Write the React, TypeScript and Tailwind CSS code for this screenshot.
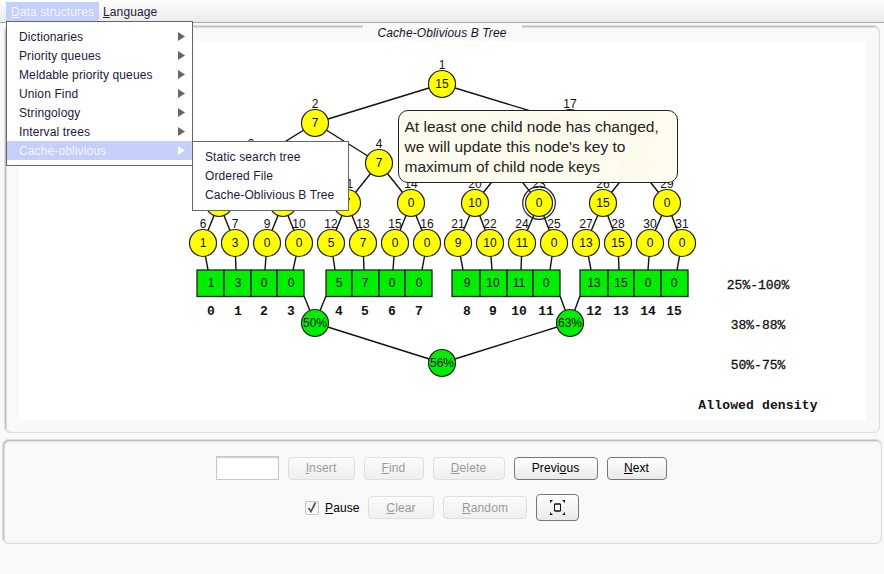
import type { ReactNode } from "react";

const FONT = "font-['Liberation_Sans',Arial,sans-serif]";

// tree node: x, y, label, value
const TREE: [number, number, string, string][] = [
  [442, 84, "1", "15"],
  [315, 123, "2", "7"],
  [570, 123, "17", "15"],
  [251, 163, "3", "3"],
  [379, 163, "4", "7"],
  [507, 163, "18", "11"],
  [635, 163, "19", "15"],
  [219, 203, "5", "3"],
  [283, 203, "8", "0"],
  [347, 203, "11", "7"],
  [411, 203, "14", "0"],
  [475, 203, "20", "10"],
  [539, 203, "23", "0"],
  [603, 203, "26", "15"],
  [667, 203, "29", "0"],
  [203, 243, "6", "1"],
  [235, 243, "7", "3"],
  [267, 243, "9", "0"],
  [299, 243, "10", "0"],
  [331, 243, "12", "5"],
  [363, 243, "13", "7"],
  [395, 243, "15", "0"],
  [427, 243, "16", "0"],
  [458, 243, "21", "9"],
  [490, 243, "22", "10"],
  [522, 243, "24", "11"],
  [554, 243, "25", "0"],
  [586, 243, "27", "13"],
  [618, 243, "28", "15"],
  [650, 243, "30", "0"],
  [682, 243, "31", "0"],
];

const EDGES: [number, number, number, number][] = [
  [442, 84, 315, 123],
  [442, 84, 570, 123],
  [315, 123, 251, 163],
  [315, 123, 379, 163],
  [570, 123, 507, 163],
  [570, 123, 635, 163],
  [251, 163, 219, 203],
  [251, 163, 283, 203],
  [379, 163, 347, 203],
  [379, 163, 411, 203],
  [507, 163, 475, 203],
  [507, 163, 539, 203],
  [635, 163, 603, 203],
  [635, 163, 667, 203],
  [219, 203, 203, 243],
  [219, 203, 235, 243],
  [283, 203, 267, 243],
  [283, 203, 299, 243],
  [347, 203, 331, 243],
  [347, 203, 363, 243],
  [411, 203, 395, 243],
  [411, 203, 427, 243],
  [475, 203, 458, 243],
  [475, 203, 490, 243],
  [539, 203, 522, 243],
  [539, 203, 554, 243],
  [603, 203, 586, 243],
  [603, 203, 618, 243],
  [667, 203, 650, 243],
  [667, 203, 682, 243],
  // leaf to array cell
  [203, 243, 208, 270],
  [235, 243, 236, 270],
  [267, 243, 265, 270],
  [299, 243, 293, 270],
  [331, 243, 335, 270],
  [363, 243, 364, 270],
  [395, 243, 393, 270],
  [427, 243, 422, 270],
  [458, 243, 463, 270],
  [490, 243, 492, 270],
  [522, 243, 521, 270],
  [554, 243, 550, 270],
  [586, 243, 591, 270],
  [618, 243, 619, 270],
  [650, 243, 648, 270],
  [682, 243, 677, 270],
  // density tree
  [304, 296, 315, 323],
  [326, 296, 315, 323],
  [560, 296, 570, 323],
  [580, 296, 570, 323],
  [315, 323, 442, 363],
  [570, 323, 442, 363],
];

// array cell: x, width, value, text x
const CELLS: [number, number, string, number][] = [
  [197, 27, "1", 211],
  [224, 27, "3", 238],
  [251, 26, "0", 264],
  [277, 27, "0", 291],
  [326, 26, "5", 339],
  [352, 27, "7", 365],
  [379, 26, "0", 392],
  [405, 27, "0", 419],
  [452, 28, "9", 467],
  [480, 27, "10", 493],
  [507, 26, "11", 519],
  [533, 27, "0", 546],
  [580, 28, "13", 594],
  [608, 26, "15", 621],
  [634, 27, "0", 648],
  [661, 27, "0", 674],
];

const DENSITY: [number, number, string][] = [
  [315, 323, "50%"],
  [570, 323, "63%"],
  [442, 363, "56%"],
];

const RANGES: [number, string, boolean][] = [
  [289, "25%-100%", false],
  [329, "38%-88%", false],
  [369, "50%-75%", false],
  [409, "Allowed density", true],
];

function TreeDrawing() {
  return (
    <svg width={847} height={379} viewBox="19 41 847 379" className="block tracking-normal">
      {EDGES.map(([x1, y1, x2, y2], i) => (
        <line key={i} x1={x1} y1={y1} x2={x2} y2={y2} stroke="#111" strokeWidth={1.4} />
      ))}
      <g fontFamily="'Liberation Sans', Arial, sans-serif" fontSize={12} textAnchor="middle" fill="#111">
        {TREE.map(([x, y, label, value]) => (
          <g key={label}>
            <circle cx={x} cy={y} r={13.5} fill="#ffff00" stroke="#222" strokeWidth={1.2} />
            {label === "23" && <circle cx={x} cy={y} r={16.3} fill="none" stroke="#222" strokeWidth={1.2} />}
            <text x={x} y={y - 15.5}>{label}</text>
            <text x={x} y={y + 4}>{value}</text>
          </g>
        ))}
        {CELLS.map(([x, w, value, tx], i) => (
          <g key={i}>
            <rect x={x} y={270} width={w} height={26.5} fill="#00ee00" stroke="#222" strokeWidth={1.3} />
            <text x={tx} y={287}>{value}</text>
          </g>
        ))}
        {DENSITY.map(([x, y, value]) => (
          <g key={value}>
            <circle cx={x} cy={y} r={13.5} fill="#00ee00" stroke="#222" strokeWidth={1.2} />
            <text x={x} y={y + 4}>{value}</text>
          </g>
        ))}
      </g>
      <g fontFamily="'Liberation Mono', 'Courier New', monospace" fontSize={13} textAnchor="middle" fill="#111">
        {CELLS.map(([, , , tx], i) => (
          <text key={i} x={tx} y={315} fontWeight={700}>{i}</text>
        ))}
        {RANGES.map(([y, text, bold]) => (
          <text
            key={text}
            x={758}
            y={y}
            fontWeight={bold ? 700 : 400}
            stroke="#111"
            strokeWidth={bold ? 0 : 0.3}
            letterSpacing={bold ? 0.15 : 0}
          >
            {text}
          </text>
        ))}
      </g>
    </svg>
  );
}

function Arrow({ white }: { white?: boolean }) {
  return (
    <svg width={7} height={9} viewBox="0 0 7 9" className="shrink-0">
      <path d="M0 0 L7 4.5 L0 9 Z" fill={white ? "#ffffff" : "#666666"} />
    </svg>
  );
}

function MenuItem({ label, active }: { label: string; active?: boolean }) {
  return (
    <div
      className={
        "flex h-[19px] items-center justify-between pl-[12px] pr-[7px] " +
        (active ? "bg-[#c4cffa] text-[#f4f5ff]" : "text-[#20203a]")
      }
    >
      <span>{label}</span>
      <Arrow white={active} />
    </div>
  );
}

function Btn({
  children,
  w,
  h = "h-[23px]",
  off,
}: {
  children: ReactNode;
  w: string;
  h?: string;
  off?: boolean;
}) {
  return (
    <button
      className={
        `${w} ${h} flex items-center justify-center rounded-[4px] border text-[12px] ` +
        (off
          ? "border-[#dfdfdf] bg-linear-to-b from-[#fbfbfb] to-[#efefef] text-[#9a9a9a]"
          : "border-[#777777] bg-linear-to-b from-[#ffffff] to-[#e9e9e9] text-black")
      }
    >
      {children}
    </button>
  );
}

export default function App() {
  return (
    <div className={`relative h-[574px] w-[884px] overflow-hidden bg-[#f9f9f9] text-[12px] tracking-[0.12px] ${FONT}`}>
      {/* Menu bar */}
      <div className="flex h-[23px] items-end border-b border-[#a9a9a9] bg-linear-to-b from-[#fefefe] to-[#ebebeb] pl-[6px]">
        <div className="flex h-[20px] w-[93px] items-center justify-center bg-[#c4cffa] text-[#f4f5ff]">
          <span>
            <u>D</u>ata structures
          </span>
        </div>
        <div className="flex h-[20px] items-center pl-[4px] text-[#20203a]">
          <span>
            <u>L</u>anguage
          </span>
        </div>
      </div>

      {/* Canvas panel */}
      <div className="mx-[4px] mt-[2px] flex h-[408px] flex-col items-center rounded-[6px] border border-[#dedede] shadow-[inset_1px_1px_2px_#a8a8a8]">
        <div className="-mt-px flex h-[16px] w-[159px] shrink-0 items-center justify-center bg-[#f9f9f9] italic text-[#14142a]">
          Cache-Oblivious B Tree
        </div>
        <div className="relative h-[379px] w-[847px] shrink-0 bg-white">
          <TreeDrawing />
          <div className="absolute left-[379px] top-[69px] h-[73px] w-[280px] rounded-[10px] border-[1.5px] border-[#222222] bg-[#fdfcee]/[0.985] pl-[6px] pt-[6px] text-[15.5px] leading-[20px] tracking-normal text-[#222222]">
            <div>At least one child node has changed,</div>
            <div>we will update this node's key to</div>
            <div>maximum of child node keys</div>
          </div>
        </div>
      </div>

      {/* Controls panel */}
      <div className="mx-[2px] mt-[6px] flex h-[105px] flex-col items-center gap-[14px] rounded-[6px] border border-[#dedede] pr-[2px] pt-[16px] shadow-[inset_1px_1px_2px_#a8a8a8]">
        <div className="flex items-center gap-[9px]">
          <div className="h-[24px] w-[63px] border border-[#c8c8c8] bg-white shadow-[inset_0_1px_1px_#cccccc]" />
          <Btn w="w-[67px]" off>
            <span>
              <u>I</u>nsert
            </span>
          </Btn>
          <Btn w="w-[60px]" off>
            <span>
              <u>F</u>ind
            </span>
          </Btn>
          <Btn w="w-[72px]" off>
            <span>
              <u>D</u>elete
            </span>
          </Btn>
          <Btn w="w-[84px]">
            <span>
              Previ<u>o</u>us
            </span>
          </Btn>
          <Btn w="w-[60px]">
            <span>
              <u>N</u>ext
            </span>
          </Btn>
        </div>
        <div className="ml-[2px] flex items-center">
          <div className="flex h-[14px] w-[14px] items-center justify-center rounded-[2px] border border-[#c3c3d0] bg-linear-to-b from-[#f0f0f0] to-[#ffffff]">
            <svg width={10} height={11} viewBox="0 0 10 11">
              <path d="M1.5 6 L4 9.5 L8.5 0.5" fill="none" stroke="#555555" strokeWidth={1.7} />
            </svg>
          </div>
          <span className="ml-[6px] w-[37px] text-black">
            <u>P</u>ause
          </span>
          <div className="w-[6px]" />
          <Btn w="w-[66px]" off>
            <span>
              <u>C</u>lear
            </span>
          </Btn>
          <div className="w-[9px]" />
          <Btn w="w-[84px]" off>
            <span>
              <u>R</u>andom
            </span>
          </Btn>
          <div className="w-[9px]" />
          <Btn w="w-[43px]" h="h-[27px]">
            <svg width={15} height={15} viewBox="0 0 15 15" fill="none" stroke="#111111">
              <path d="M4.5 4H10.5M4.5 11H10.5" strokeWidth={1.4} />
              <path d="M4.5 4V11M10.5 4V11" strokeWidth={1} />
              <path d="M0 0H3L0 3ZM15 0V3L12 0ZM15 15H12L15 12ZM0 15V12L3 15Z" fill="#111111" stroke="none" />
            </svg>
          </Btn>
        </div>
      </div>

      {/* Open menus */}
      <div className="absolute left-[6px] top-[21px] w-[187px] border border-[#666666] bg-white py-[5px]">
        <MenuItem label="Dictionaries" />
        <MenuItem label="Priority queues" />
        <MenuItem label="Meldable priority queues" />
        <MenuItem label="Union Find" />
        <MenuItem label="Stringology" />
        <MenuItem label="Interval trees" />
        <MenuItem label="Cache-oblivious" active />
      </div>
      <div className="absolute left-[192px] top-[141px] w-[157px] border border-[#666666] bg-white pb-[6px] pt-[5px] text-[#20203a]">
        <div className="flex h-[19px] items-center pl-[12px]">Static search tree</div>
        <div className="flex h-[19px] items-center pl-[12px]">Ordered File</div>
        <div className="flex h-[19px] items-center pl-[12px]">Cache-Oblivious B Tree</div>
      </div>
    </div>
  );
}
